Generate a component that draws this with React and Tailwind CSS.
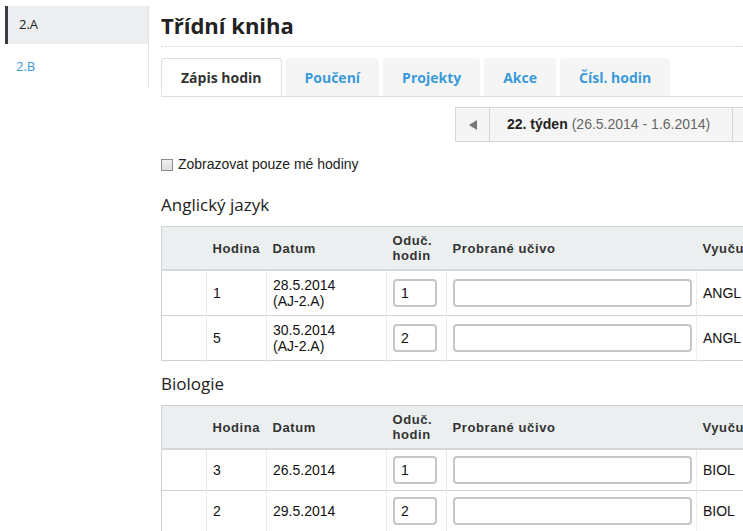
import React from 'react';

const tabs = ['Zápis hodin', 'Poučení', 'Projekty', 'Akce', 'Čísl. hodin'];

const subjects = [
  {
    name: 'Anglický jazyk',
    rows: [
      { hodina: '1', datum: ['28.5.2014', '(AJ-2.A)'], odu: '1', ucitel: 'ANGL' },
      { hodina: '5', datum: ['30.5.2014', '(AJ-2.A)'], odu: '2', ucitel: 'ANGL' },
    ],
  },
  {
    name: 'Biologie',
    rows: [
      { hodina: '3', datum: ['26.5.2014'], odu: '1', ucitel: 'BIOL' },
      { hodina: '2', datum: ['29.5.2014'], odu: '2', ucitel: 'BIOL' },
    ],
  },
];

const SubjectTable = ({ subject, first }) => (
  <div>
    <h2
      className={
        (first ? 'mt-[18px] ' : 'mt-[11px] ') +
        "text-[17px] leading-[24px] text-[#222] font-['Open_Sans',sans-serif]"
      }
    >
      {subject.name}
    </h2>
    <table className="mt-[9px] border-collapse w-[680px] table-fixed font-['Liberation_Sans',Arial,sans-serif]">
      <colgroup>
        <col className="w-[45px]" />
        <col className="w-[60px]" />
        <col className="w-[120px]" />
        <col className="w-[60px]" />
        <col className="w-[250px]" />
        <col className="w-[145px]" />
      </colgroup>
      <thead>
        <tr className="bg-[#eceff0] border border-[#cfd3d5] border-b-2 border-b-[#d4d8da] text-left text-[13px] leading-[15px] font-bold text-[#333] tracking-[0.6px]">
          <th className="px-[6px] py-[6px]"></th>
          <th className="px-[6px] py-[6px]">Hodina</th>
          <th className="px-[6px] py-[6px]">Datum</th>
          <th className="px-[6px] py-[6px]">Oduč.<br />hodin</th>
          <th className="px-[6px] py-[6px]">Probrané učivo</th>
          <th className="px-[6px] py-[6px] whitespace-nowrap">Vyučující</th>
        </tr>
      </thead>
      <tbody>
        {subject.rows.map((r, i) => (
          <tr key={i} className="border border-[#cfd3d5] text-[14px] leading-[16px] text-[#111]">
            <td className="px-[6px] py-[6px] border-r border-[#ececec]"></td>
            <td className="px-[6px] py-[6px] border-r border-[#ececec]">{r.hodina}</td>
            <td className="px-[6px] py-[6px] border-r border-[#ececec]">
              {r.datum.map((d) => (
                <div key={d}>{d}</div>
              ))}
            </td>
            <td className="px-[6px] py-[6px] border-r border-[#ececec]">
              <input
                defaultValue={r.odu}
                className="w-[44px] h-[28px] border-2 border-[#c3c7ca] rounded-[4px] px-[6px] text-[14px] outline-none"
              />
            </td>
            <td className="pl-[6px] pr-[5px] py-[6px] border-r border-[#ececec]">
              <input className="w-[239px] h-[28px] border-2 border-[#c3c7ca] rounded-[4px] px-[6px] outline-none" />
            </td>
            <td className="px-[6px] py-[6px]">{r.ucitel}</td>
          </tr>
        ))}
      </tbody>
    </table>
  </div>
);

export default function App() {
  return (
    <div className="w-[743px] h-[531px] overflow-hidden flex bg-white font-['Liberation_Sans',Arial,sans-serif]">
      <aside className="w-[149px] shrink-0 pt-[4px] pl-[5px]">
        <ul className="border-r border-[#e4e4e4] h-[82px] font-['Open_Sans',sans-serif] text-[13px]">
          <li className="mt-[2px] h-[38px] flex items-center border-l-[3px] border-[#3a3d42] bg-[#eceeef] pl-[11px] text-[#222]">2.A</li>
          <li className="h-[42px] pt-[4px] flex items-center pl-[11px] text-[#3a9ad9]">2.B</li>
        </ul>
      </aside>

      <main className="flex-1 min-w-0 pl-[12px] pt-[9px]">
        <h1 className="text-[22px] leading-[32px] font-bold text-[#222] font-['Open_Sans',sans-serif]">Třídní kniha</h1>
        <div className="mt-[5px] border-t border-dotted border-[#cfcfcf] w-[700px]"></div>

        <div className="mt-[11px] flex gap-[4px] border-b border-[#dddddd] w-[700px] font-['Open_Sans',sans-serif]">
          {tabs.map((t, i) => (
            <div
              key={t}
              className={
                i === 0
                  ? 'h-[38px] px-[19px] flex items-center text-[14px] font-bold text-[#333] bg-white border border-[#dddddd] border-b-white -mb-px rounded-t-[4px]'
                  : 'h-[38px] px-[19px] flex items-center text-[14px] font-bold text-[#3a9ad9] bg-[#f5f5f5] rounded-t-[4px]'
              }
            >
              {t}
            </div>
          ))}
        </div>

        <div className="mt-[10px] ml-[294px] flex h-[35px] w-[320px] text-[14px]">
          <div className="w-[35px] flex items-center justify-center border border-[#d6d6d6] bg-[#f5f5f5]">
            <span className="block w-0 h-0 border-y-[5px] border-y-transparent border-r-[8px] border-r-[#777]"></span>
          </div>
          <div className="w-[243px] flex items-center pl-[17px] border border-l-0 border-[#d6d6d6] bg-[#f5f5f5] whitespace-nowrap">
            <span className="font-bold text-[#222]">22. týden</span>
            <span className="ml-[4px] text-[#666]">(26.5.2014 - 1.6.2014)</span>
          </div>
          <div className="w-[35px] border border-l-0 border-[#d6d6d6] bg-[#f5f5f5]"></div>
        </div>

        <label className="mt-[12px] flex items-center gap-[5px] text-[14px] text-[#222]">
          <span className="w-[12px] h-[12px] border border-[#8a8a8a] bg-gradient-to-b from-[#f0f0f0] to-[#dcdcdc] inline-block"></span>
          Zobrazovat pouze mé hodiny
        </label>

        {subjects.map((s, i) => (
          <SubjectTable key={s.name} subject={s} first={i === 0} />
        ))}
      </main>
    </div>
  );
}
